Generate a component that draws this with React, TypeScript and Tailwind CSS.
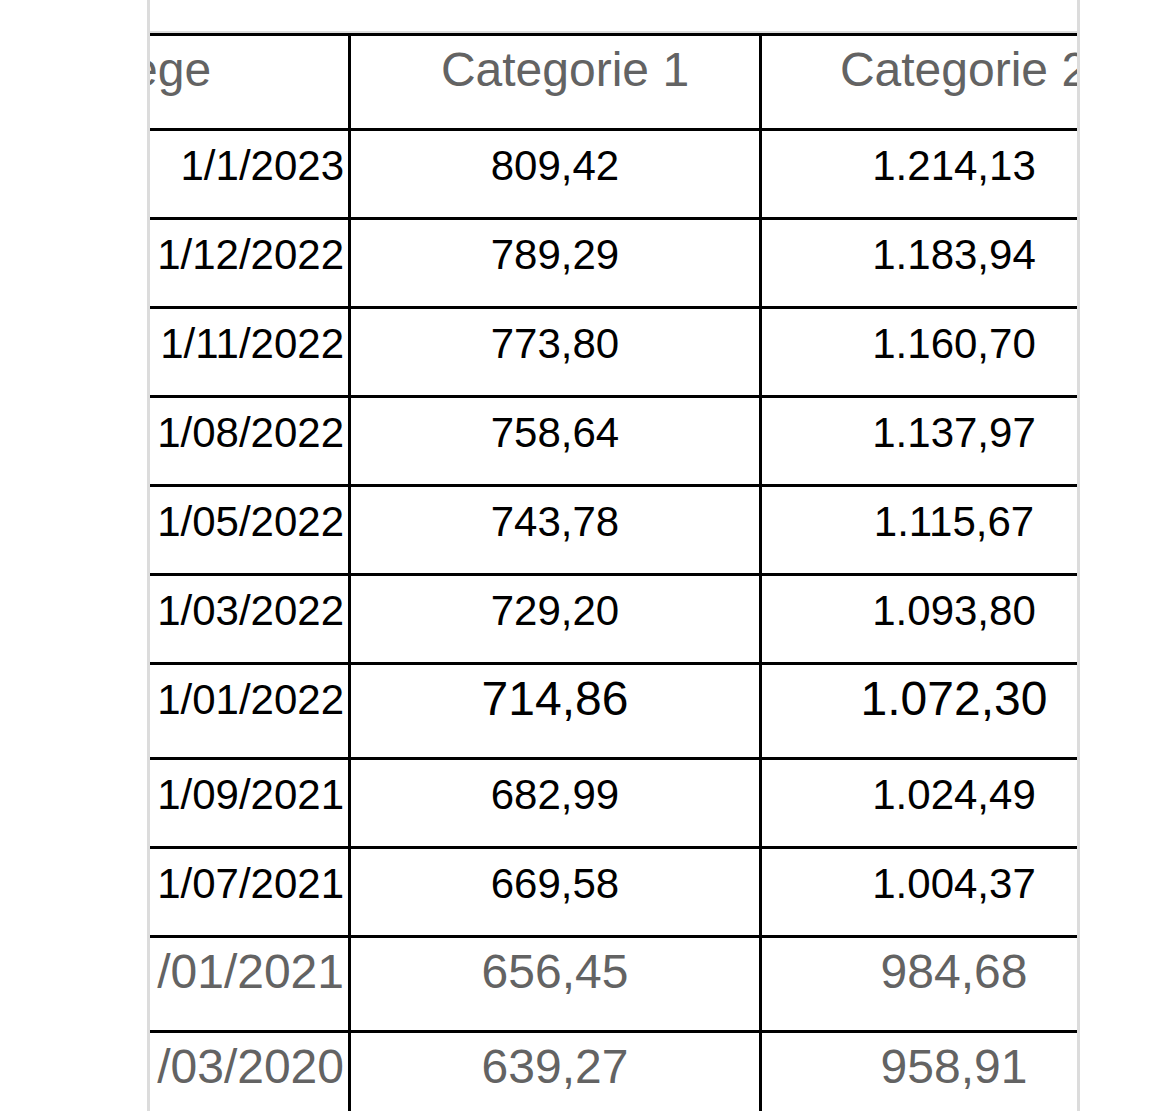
import React from 'react';

interface Row {
  date: string;
  cat1: string;
  cat2: string;
  tone?: 'big' | 'muted';
}

const rows: Row[] = [
  { date: '1/1/2023', cat1: '809,42', cat2: '1.214,13' },
  { date: '1/12/2022', cat1: '789,29', cat2: '1.183,94' },
  { date: '1/11/2022', cat1: '773,80', cat2: '1.160,70' },
  { date: '1/08/2022', cat1: '758,64', cat2: '1.137,97' },
  { date: '1/05/2022', cat1: '743,78', cat2: '1.115,67' },
  { date: '1/03/2022', cat1: '729,20', cat2: '1.093,80' },
  { date: '1/01/2022', cat1: '714,86', cat2: '1.072,30', tone: 'big' },
  { date: '1/09/2021', cat1: '682,99', cat2: '1.024,49' },
  { date: '1/07/2021', cat1: '669,58', cat2: '1.004,37' },
  { date: '/01/2021', cat1: '656,45', cat2: '984,68', tone: 'muted' },
  { date: '/03/2020', cat1: '639,27', cat2: '958,91', tone: 'muted' },
];

const TableRow: React.FC<{ row: Row }> = ({ row }) => {
  const tall = row.tone !== undefined;
  const dateCls =
    row.tone === 'muted'
      ? 'text-[48px] pt-[10px] text-[#636363]'
      : 'text-[42px] pt-[14px] text-black';
  const valueCls =
    row.tone === 'muted'
      ? 'text-[48px] pt-[10px] text-[#636363]'
      : row.tone === 'big'
        ? 'text-[48px] pt-[10px] text-black'
        : 'text-[42px] pt-[14px] text-black';

  return (
    <div className={`flex border-b-[3px] border-black ${tall ? 'h-[95px]' : 'h-[89px]'}`}>
      <div className={`w-[201px] shrink-0 border-r-[3px] border-black overflow-hidden flex justify-end pr-[4px] leading-none whitespace-nowrap ${dateCls}`}>
        <span>{row.date}</span>
      </div>
      <div className={`w-[411px] shrink-0 border-r-[3px] border-black text-center leading-none ${valueCls}`}>
        {row.cat1}
      </div>
      <div className={`w-[384px] shrink-0 text-center leading-none ${valueCls}`}>
        {row.cat2}
      </div>
    </div>
  );
};

export default function App() {
  return (
    <div className="w-[1170px] h-[1111px] overflow-hidden bg-white flex font-['Liberation_Sans',Arial,sans-serif]">
      <div className="w-[147px] shrink-0" />
      <div className="w-[933px] shrink-0 border-x-[3px] border-[#dcdcdc] flex flex-col">
        <div className="h-[33px] shrink-0 border-b-2 border-[#dcdcdc]" />
        <div className="flex-1 overflow-hidden">
          <div className="w-[996px] border-t-[3px] border-black">
            {/* header */}
            <div className="flex h-[95px] border-b-[3px] border-black text-[48px] leading-none text-[#636363]">
              <div className="w-[201px] shrink-0 border-r-[3px] border-black overflow-hidden pt-[10px] whitespace-nowrap">
                <span className="block ml-[-19px]">ege</span>
              </div>
              <div className="w-[411px] shrink-0 border-r-[3px] border-black text-center pt-[10px] pl-[20px] whitespace-nowrap">
                Categorie 1
              </div>
              <div className="w-[384px] shrink-0 text-center pt-[10px] pl-[20px] whitespace-nowrap">
                Categorie 2
              </div>
            </div>
            {rows.map((row) => (
              <TableRow key={row.date} row={row} />
            ))}
          </div>
        </div>
      </div>
    </div>
  );
}
